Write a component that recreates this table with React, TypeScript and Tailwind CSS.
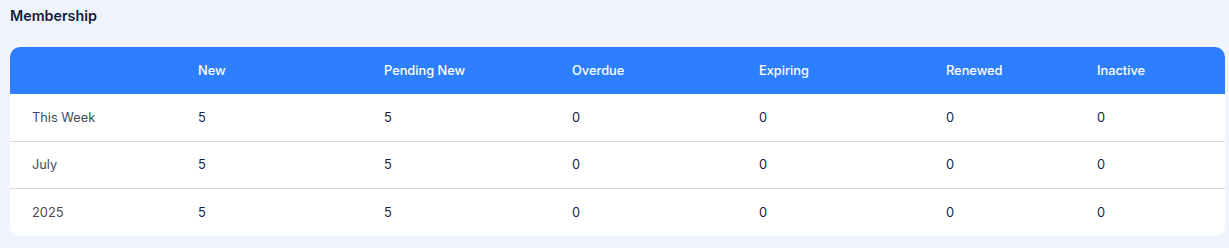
import React from "react";

const columns = ["New", "Pending New", "Overdue", "Expiring", "Renewed", "Inactive"];
const rows: { label: string; values: number[] }[] = [
  { label: "This Week", values: [5, 5, 0, 0, 0, 0] },
  { label: "July", values: [5, 5, 0, 0, 0, 0] },
  { label: "2025", values: [5, 5, 0, 0, 0, 0] },
];

const grid = "grid grid-cols-[166px_186px_188px_187px_187px_151px_1fr]";

export default function App() {
  return (
    <div
      className="w-[1229px] h-[248px] bg-[#f0f5fd] px-[10px] pt-[6px]"
      style={{ fontFamily: "Inter, 'Noto Sans', sans-serif" }}
    >
      <h2 className="text-[14.3px] font-semibold leading-[20px] text-[#14213d]">Membership</h2>
      <div className="mt-[21px] w-[1215px] rounded-[10px] bg-white overflow-hidden">
        <div className={`${grid} h-[47px] items-center bg-[#2e7fff] text-[12.8px] font-medium text-white`}>
          <div />
          {columns.map((c) => (
            <div key={c} className="pl-[22px]">
              {c}
            </div>
          ))}
        </div>
        {rows.map((r, i) => (
          <div
            key={r.label}
            className={`${grid} ${i === rows.length - 1 ? "h-[48px]" : "h-[47px]"} items-center text-[12.8px] ${
              i > 0 ? "border-t border-[#d5d9df]" : ""
            }`}
          >
            <div className="pl-[22px] text-[#3f4a5c]">{r.label}</div>
            {r.values.map((v, j) => (
              <div key={j} className="pl-[22px] text-[#0f1f4b]">
                {v}
              </div>
            ))}
          </div>
        ))}
      </div>
    </div>
  );
}
